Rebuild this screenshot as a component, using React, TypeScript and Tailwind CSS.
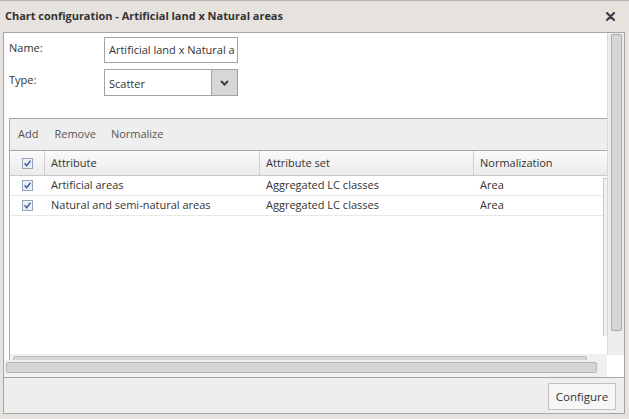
import React from "react";

const Check: React.FC = () => (
  <svg width="11" height="11" viewBox="0 0 11 11">
    <rect x="0.5" y="0.5" width="10" height="10" fill="#eef2f8" stroke="#96a4b8" />
    <path d="M2.6 5.3 L4.6 7.7 L8.5 2.7" fill="none" stroke="#3d5fab" strokeWidth="1.5" />
  </svg>
);

const rows = [
  { name: "Artificial areas", set: "Aggregated LC classes", norm: "Area" },
  { name: "Natural and semi-natural areas", set: "Aggregated LC classes", norm: "Area" },
];

export default function App() {
  return (
    <div className="w-[629px] h-[419px] bg-[#e6e2dd] border-t border-[#b4b4b4] flex flex-col overflow-hidden font-['Open_Sans',sans-serif] text-[11px] text-[#333]">
      {/* title bar */}
      <div className="h-[31px] flex items-center justify-between pl-[5px] pr-[14px]">
        <span className="font-bold text-[11px] text-[#333] tracking-[-0.03px]">Chart configuration - Artificial land x Natural areas</span>
        <svg width="9" height="9" viewBox="0 0 9 9">
          <path d="M1 1 L8 8 M8 1 L1 8" stroke="#3d3d4a" strokeWidth="2.2" strokeLinecap="round" />
        </svg>
      </div>

      <div className="ml-[3px] mr-[4px] h-[382px] border border-[#a6a6a6] flex flex-col">
        <div className="h-[344px] flex bg-white">
          <div className="w-[603px] flex flex-col">
            <div className="h-[327px] flex flex-col overflow-hidden">
              {/* form */}
              <div className="h-[85px] pt-[4px] flex flex-col gap-[6px]">
                <div className="flex">
                  <div className="w-[100px] pl-[5px] pt-[3px]">Name:</div>
                  <div className="w-[134px] h-[26px] border border-[#a3a3a3] pl-[4px] pr-[2px] flex items-center pt-[1px]">
                    <span className="overflow-hidden whitespace-nowrap text-clip">Artificial land x Natural areas</span>
                  </div>
                </div>
                <div className="flex">
                  <div className="w-[100px] pl-[5px] pt-[3px]">Type:</div>
                  <div className="w-[134px] h-[27px] border border-[#a3a3a3] flex">
                    <div className="flex-1 pl-[4px] flex items-center pt-[3px]">Scatter</div>
                    <div className="w-[26px] bg-[#d7d7d7] border-l border-[#a3a3a3] flex items-center justify-center">
                      <svg width="9" height="6" viewBox="0 0 9 6">
                        <path d="M1 1 L4.5 4.5 L8 1" fill="none" stroke="#3d3d4a" strokeWidth="2" />
                      </svg>
                    </div>
                  </div>
                </div>
              </div>

              {/* grid */}
              <div className="ml-[5px] w-[598px] flex-1 border-t border-l border-[#a8a8a8] flex flex-col">
                <div className="h-[31px] bg-[#eeeeee] flex items-center text-[#555]">
                  <span className="px-[8px]">Add</span>
                  <span className="px-[8px]">Remove</span>
                  <span className="px-[7px]">Normalize</span>
                </div>
                <div className="h-[26px] border-t border-b border-t-[#a8a8a8] border-b-[#c8c8c8] bg-gradient-to-b from-[#fafafa] to-[#ebebeb] flex">
                  <div className="w-[35px] border-r border-[#d0d0d0] flex items-center justify-center">
                    <Check />
                  </div>
                  <div className="w-[215px] border-r border-[#d0d0d0] pl-[6px] flex items-center">Attribute</div>
                  <div className="w-[214px] border-r border-[#d0d0d0] pl-[6px] flex items-center">Attribute set</div>
                  <div className="flex-1 pl-[6px] flex items-center">Normalization</div>
                </div>
                <div className="flex-1 flex">
                  <div className="flex-1 flex flex-col">
                    {rows.map((r) => (
                      <div key={r.name} className="h-[20px] border-b border-[#e8e8e8] flex">
                        <div className="w-[35px] flex items-center justify-center">
                          <Check />
                        </div>
                        <div className="w-[215px] pl-[6px] flex items-center">{r.name}</div>
                        <div className="w-[214px] pl-[6px] flex items-center">{r.set}</div>
                        <div className="flex-1 pl-[6px] flex items-center">{r.norm}</div>
                      </div>
                    ))}
                  </div>
                  <div className="w-[4px] mt-[2px] mb-[18px] bg-[#f0f0f0] border-l border-t border-[#c9c9c9]" />
                </div>
                <div className="h-[6px] bg-[#f0f0f0] pt-[2px]">
                  <div className="ml-[3px] w-[574px] h-[4px] bg-[#d6d6d6] border-t border-l border-r border-[#bdbdbd] rounded-t-[2px]" />
                </div>
              </div>
            </div>
            <div className="h-[17px] bg-[#f0f0f0] pt-[2px] pl-[2px]">
              <div className="w-[591px] h-[11px] bg-[#d6d6d6] border border-[#b5b5b5] rounded-[2px]" />
            </div>
          </div>
          <div className="w-[17px] flex flex-col">
            <div className="h-[322px] bg-[#ededed] border-l border-[#d8d8d8] pt-[1px] pl-[3px]">
              <div className="w-[11px] h-[297px] bg-[#d6d6d6] border border-[#ababab] rounded-[2px]" />
            </div>
            <div className="flex-1 bg-white" />
          </div>
        </div>

        {/* footer */}
        <div className="flex-1 bg-[#eeeeee] border-t border-[#a6a6a6] flex justify-end items-start pt-[5px] pr-[8px]">
          <div className="w-[68px] h-[27px] bg-[#f6f6f6] border border-[#c3c3c3] flex items-center justify-center text-[11.5px] text-[#333]">
            Configure
          </div>
        </div>
      </div>
    </div>
  );
}
